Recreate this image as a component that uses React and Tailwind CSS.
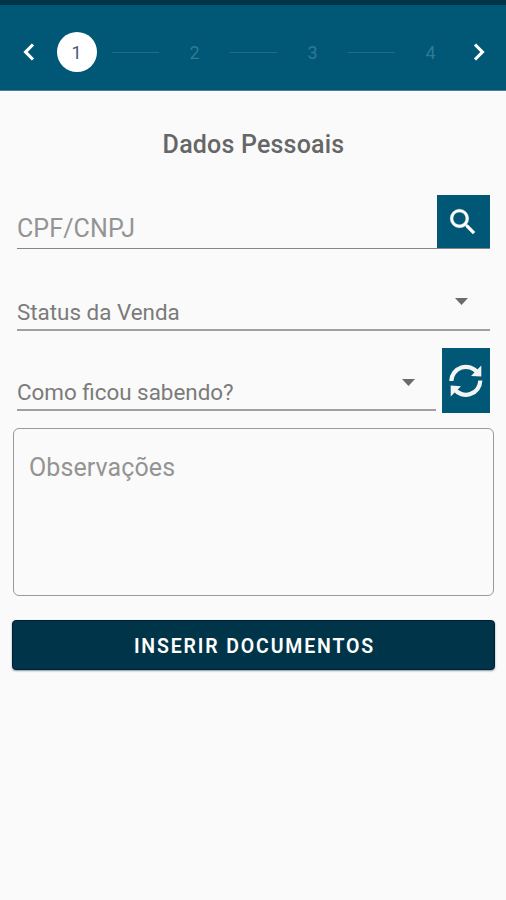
const steps = [1, 2, 3, 4];

function Chevron({ d }) {
  return (
    <svg className="h-[18px] w-3 shrink-0" viewBox="0 0 12 18" fill="none" stroke="#fff" strokeWidth="3.2">
      <path d={d} />
    </svg>
  );
}

function Caret() {
  return <svg className="h-[7px] w-[13px] shrink-0" viewBox="0 0 13 7"><path d="M0 0h13L6.5 7z" fill="#6b6b6b" /></svg>;
}

function Stepper() {
  return (
    <header className="flex h-[86px] items-center border-b border-[#43809a] bg-[#005776] pt-[9px] pl-[23px]">
      <div className="flex w-full items-center">
        <Chevron d="M10 1.5 2.6 9 10 16.5" />
        <div className="ml-[21.5px] flex items-center">
          {steps.map((n) => (
            <div key={n} className="flex items-center">
              {n > 1 && <div className="mr-4 ml-[15px] h-px w-[47px] bg-[#1f6d89]" />}
              <div className={n === 1
                ? "flex size-10 items-center justify-center rounded-full bg-white text-[18px] text-[#4b5675]"
                : "flex size-10 items-center justify-center text-[18px] text-[#317a94]"}>{n}</div>
            </div>
          ))}
        </div>
        <div className="ml-[22px] flex"><Chevron d="M2 1.5 9.4 9 2 16.5" /></div>
      </div>
    </header>
  );
}

export default function App() {
  return (
    <div className="flex h-[900px] w-[506px] flex-col overflow-hidden bg-[#fafafa] font-['Roboto',sans-serif]">
      <div className="h-[5px] bg-[#003549]" />
      <Stepper />
      <main className="flex flex-col">
        <h1 className="mt-[38px] pt-px pl-px text-center text-[25px] leading-[30px] font-medium tracking-[0.2px] text-[#666]">Dados Pessoais</h1>
        <div className="mt-[35px] mr-4 ml-[17px] flex h-[54px] border-b border-[#858585]">
          <div className="flex-1 pt-[18px] text-[25px] leading-[32px] tracking-[0.1px] text-[#949494]">CPF/CNPJ</div>
          <button className="flex h-[53px] w-[53px] items-center justify-center bg-[#005776]">
            <svg className="mr-px size-[34px]" viewBox="0 0 24 24" fill="#fff" stroke="#fff" strokeWidth="0.3"><path d="M15.5 14h-.79l-.28-.27A6.47 6.47 0 0 0 16 9.5 6.5 6.5 0 1 0 9.5 16c1.61 0 3.09-.59 4.23-1.57l.27.28v.79l5 4.99L20.49 19zm-6 0C7.01 14 5 11.99 5 9.5S7.01 5 9.5 5 14 7.01 14 9.5 11.99 14 9.5 14" /></svg>
          </button>
        </div>
        <div className="mt-[49px] mr-4 ml-[17px] flex h-[33px] border-b-2 border-[#a0a0a0]">
          <div className="flex-1 text-[22.4px] leading-[28px] text-[#7b7b7b]">Status da Venda</div>
          <div className="mr-[22px]"><Caret /></div>
        </div>
        <div className="mt-[17px] mr-4 ml-[17px] flex h-[65px] gap-[6px]">
          <div className="flex h-[63px] flex-1 border-b-2 border-[#a0a0a0] pt-[30px]">
            <div className="flex-1 text-[22.4px] leading-[28px] text-[#7b7b7b]">Como ficou sabendo?</div>
            <div className="mr-[21px] pt-px"><Caret /></div>
          </div>
          <button className="flex w-12 items-center justify-center bg-[#005776]">
            <svg className="size-9" viewBox="0 0 36 36" fill="none" stroke="#f4f4f4" strokeWidth="4.2">
              <path d="M3.3 18A14.5 14.5 0 0 1 29.500 9.800M32.300 17.500A14.500 14.500 0 0 1 6.200 26" />
              <path d="M33.300 2.500v11L23 13zM2.700 33.500v-11L13 23.300z" fill="#f4f4f4" stroke="none" />
            </svg>
          </button>
        </div>
        <div className="mt-[15px] mr-3 ml-[13px] h-[168px] rounded-[6px] border-[1.5px] border-[#999] pt-[24px] pl-[15px] text-[25px] leading-[30px] tracking-[0.1px] text-[#949494]">Observações</div>
        <button className="mt-[24px] mr-[11px] ml-3 h-[50px] rounded-[4px] border border-[#001d35] bg-[#003549] pt-[2px] pl-[2px] text-[19.5px] leading-[48px] font-semibold tracking-[1.85px] text-white shadow-[0_1px_2px_#8b94a4]">INSERIR DOCUMENTOS</button>
      </main>
    </div>
  );
}
